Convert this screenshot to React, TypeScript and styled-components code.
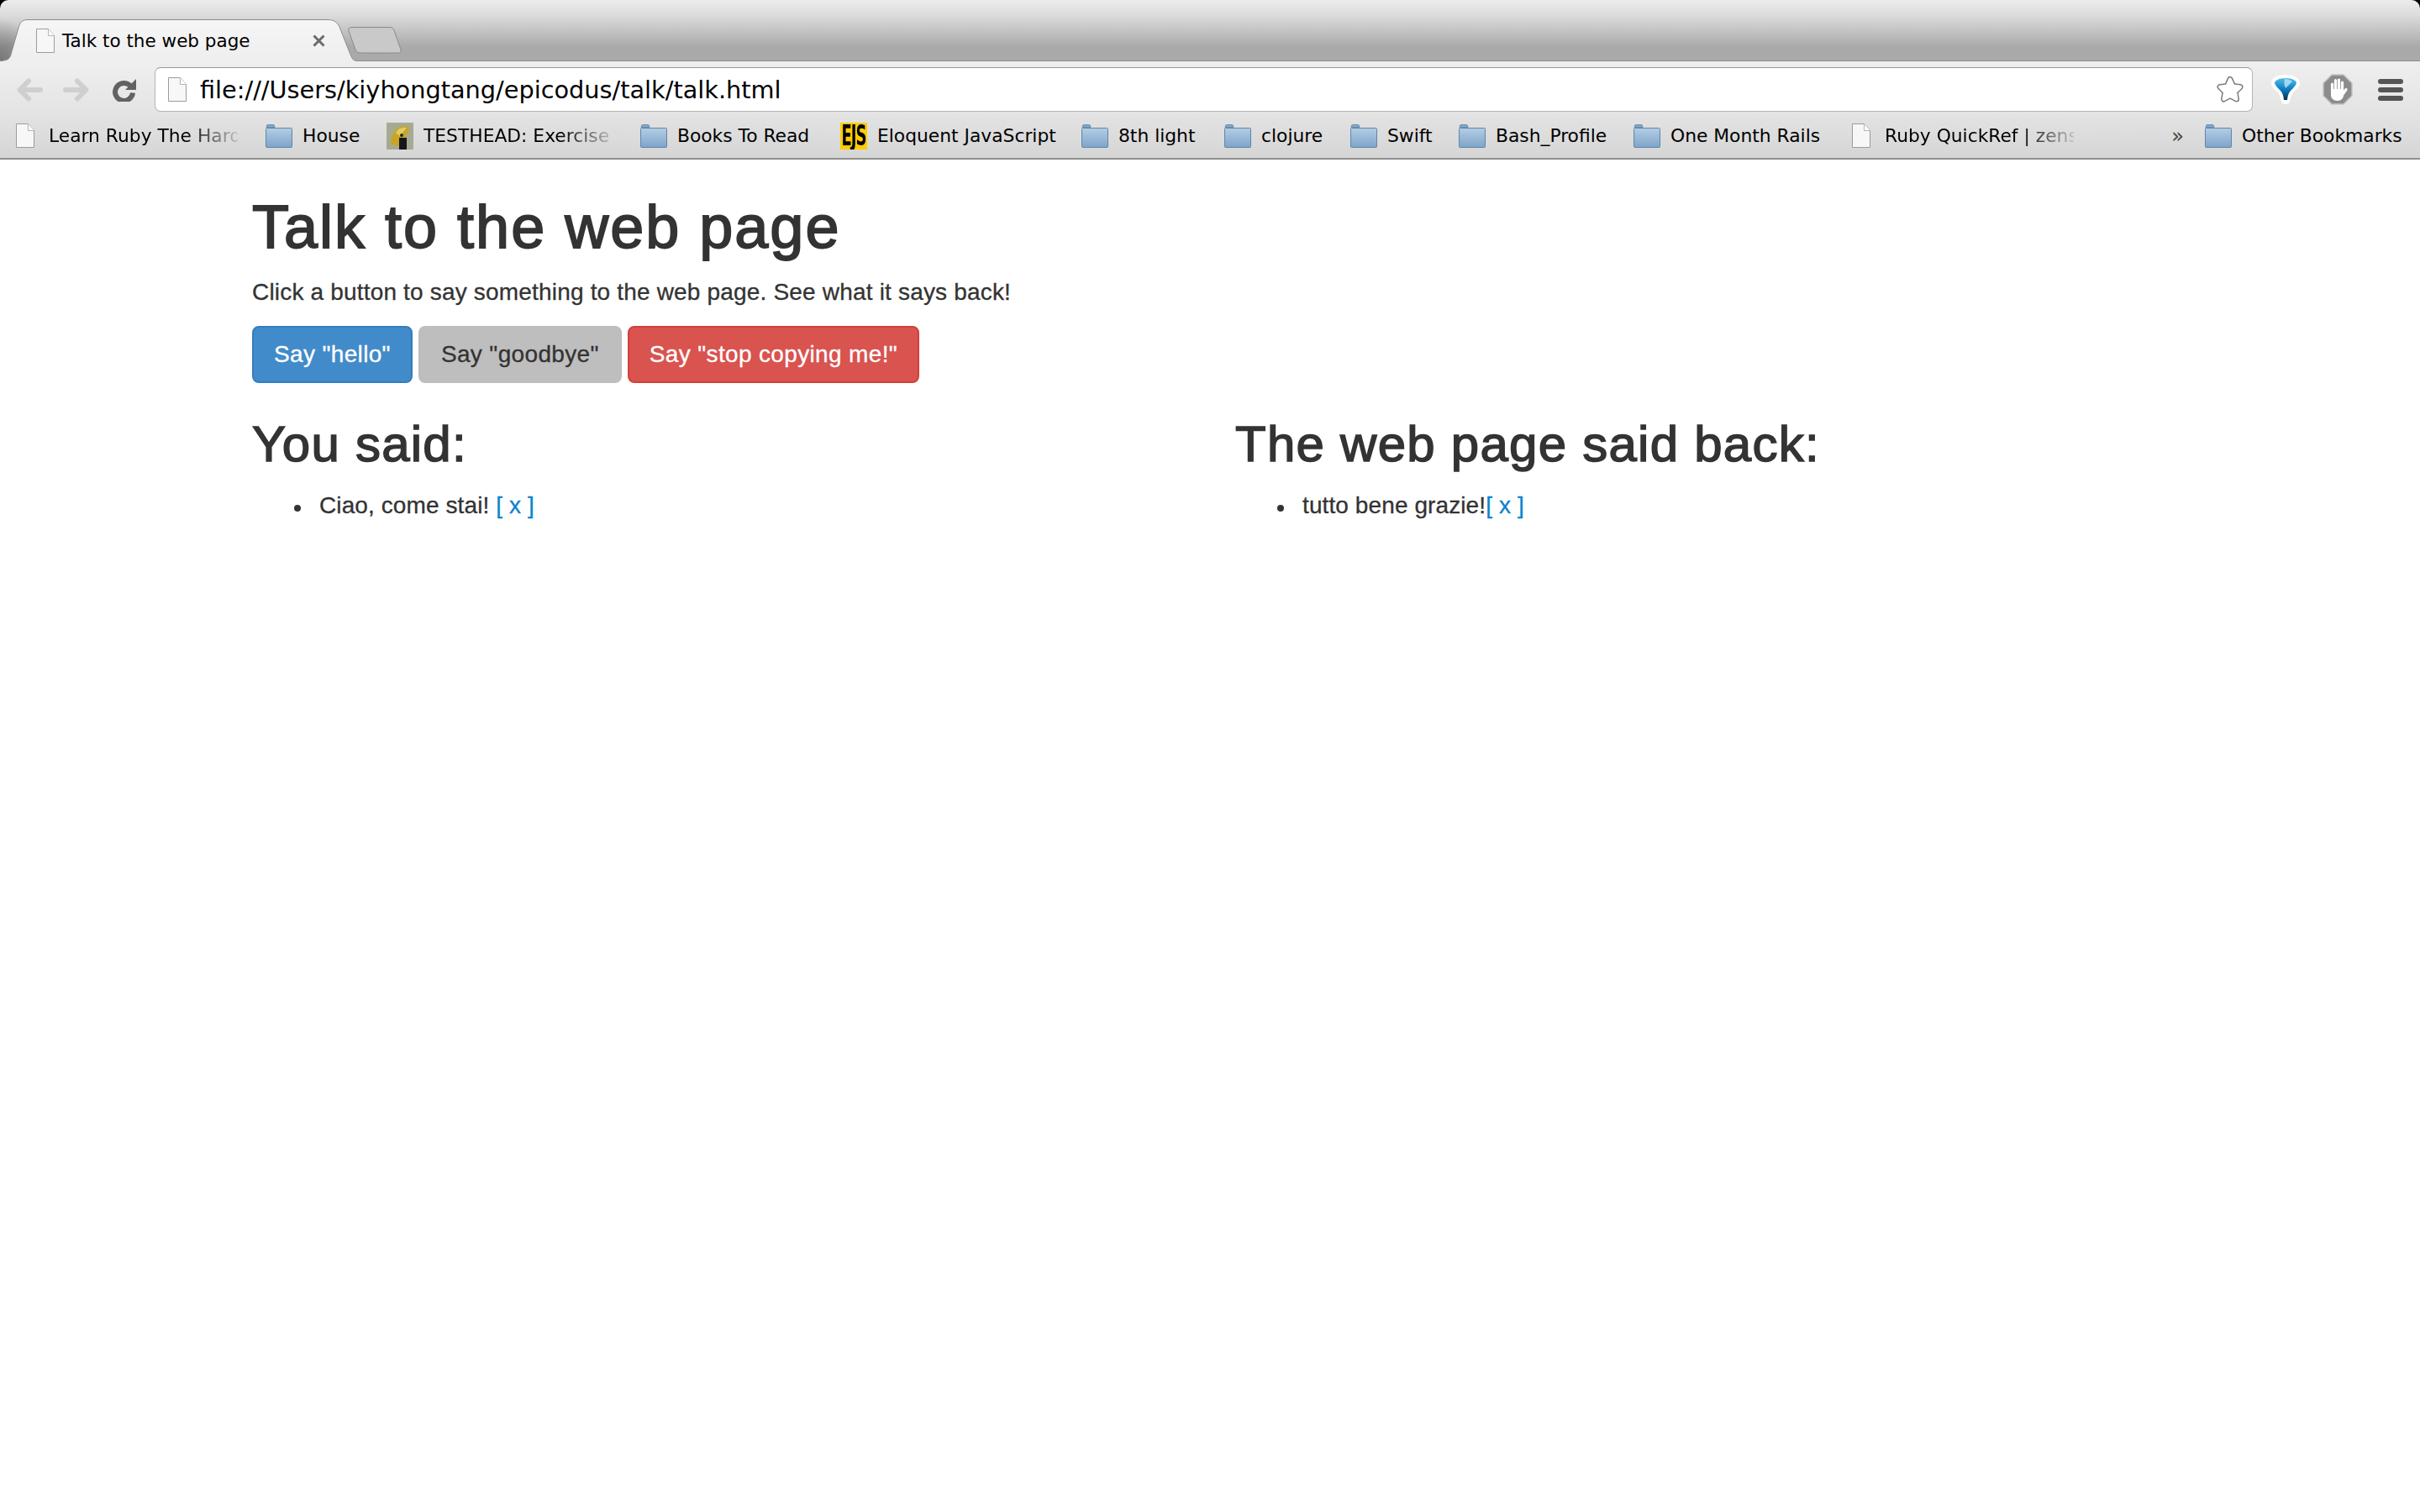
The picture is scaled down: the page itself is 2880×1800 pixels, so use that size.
import React from 'react'
import styled, { createGlobalStyle } from 'styled-components'

const CHROME_FONT = '"DejaVu Sans", sans-serif'
const PAGE_FONT = '"Liberation Sans", Arial, sans-serif'

type BookmarkIcon = 'doc' | 'folder' | 'testhead' | 'ejs'

const BOOKMARKS: { label: string; icon: BookmarkIcon; width: number; fade?: boolean }[] = [
  { label: 'Learn Ruby The Hard', icon: 'doc', width: 225, fade: true },
  { label: 'House', icon: 'folder', width: 67 },
  { label: 'TESTHEAD: Exercise', icon: 'testhead', width: 225, fade: true },
  { label: 'Books To Read', icon: 'folder', width: 161 },
  { label: 'Eloquent JavaScript', icon: 'ejs', width: 210 },
  { label: '8th light', icon: 'folder', width: 93 },
  { label: 'clojure', icon: 'folder', width: 73 },
  { label: 'Swift', icon: 'folder', width: 52 },
  { label: 'Bash_Profile', icon: 'folder', width: 131 },
  { label: 'One Month Rails', icon: 'folder', width: 178 },
  { label: 'Ruby QuickRef | zens', icon: 'doc', width: 225, fade: true },
]

const GlobalStyle = createGlobalStyle`
  html, body {
    margin: 0;
    padding: 0;
    background: #fff;
  }
  * {
    box-sizing: border-box;
  }
`

const Chrome = styled.header`
  background: #000;
  font-family: ${CHROME_FONT};
  color: #000;
`

const TabStrip = styled.div`
  display: flex;
  align-items: flex-start;
  height: 73px;
  padding: 23px 0 0 4px;
  border-radius: 10px 10px 0 0;
  border-bottom: 1px solid #8c8c8c;
  background:
    radial-gradient(ellipse 40px 50px at 0 72px, rgba(90, 90, 90, 0.65), rgba(90, 90, 90, 0)),
    linear-gradient(#ececec 0, #dcdcdc 18px, #a9a9a9 56px, #aaaaaa 72px);
`

const Tab = styled.div`
  position: relative;
  display: flex;
  align-items: center;
  width: 419px;
  height: 50px;
  padding: 0 36px 0 39px;
  font-size: 21.5px;
`

const TabShape = styled.svg`
  position: absolute;
  left: 0;
  top: 0;
`

const TabIcon = styled.span`
  position: relative;
  display: flex;
  margin-right: 9px;
`

const TabTitle = styled.span`
  position: relative;
  flex: 1;
  white-space: nowrap;
`

const TabClose = styled.svg`
  position: relative;
`

const NewTab = styled.svg`
  margin: 9px 0 0 -9px;
`

const Toolbar = styled.div`
  background: linear-gradient(#efefef 0, #e4e4e4 60px, #d5d5d5 116px);
  border-bottom: 2px solid #8e8e8e;
`

const NavRow = styled.div`
  display: flex;
  align-items: center;
  height: 60px;
  padding: 7px 20px 0;
`

const NavButton = styled.svg<{ $gap: number }>`
  flex: none;
  margin-left: ${(p) => p.$gap}px;
  &:first-child {
    margin-left: 0;
  }
`

const AddressBar = styled.div`
  flex: 1;
  display: flex;
  align-items: center;
  gap: 16px;
  height: 53px;
  margin-left: 22px;
  padding: 0 8px 0 15px;
  background: #fff;
  border: 1px solid #b4b4b4;
  border-top-color: #9a9a9a;
  border-radius: 7px;
`

const AddressText = styled.span`
  flex: 1;
  padding-top: 2px;
  font-size: 28.75px;
  line-height: 1;
  white-space: nowrap;
`

const BookmarkBar = styled.nav`
  display: flex;
  align-items: center;
  gap: 33px;
  height: 55px;
  padding: 2px 22px 0 14px;
`

const Bookmark = styled.a`
  display: flex;
  align-items: center;
  gap: 12px;
  font-size: 21.8px;
`

const BookmarkIconBox = styled.span`
  display: flex;
  justify-content: center;
  width: 32px;
`

const BookmarkLabel = styled.span<{ $width: number; $fade?: boolean }>`
  display: block;
  width: ${(p) => p.$width}px;
  white-space: nowrap;
  ${(p) =>
    p.$fade &&
    `mask-image: linear-gradient(to right, #000 72%, rgba(0, 0, 0, 0.12) 100%);`}
`

const Overflow = styled.span`
  margin-left: auto;
  margin-right: -8px;
  font-size: 24px;
  color: #444;
`

const EjsFavicon = styled.span`
  display: block;
  width: 32px;
  height: 32px;
  background: #fc0;
  overflow: hidden;
`

const EjsLetters = styled.span`
  display: block;
  color: #000;
  font: bold 20px/30px "DejaVu Sans Condensed", "DejaVu Sans", sans-serif;
  letter-spacing: -1px;
  text-align: center;
  white-space: nowrap;
  transform: scaleY(1.65);
`

const Container = styled.main`
  width: 2340px;
  margin: 0 auto;
  padding: 41px 30px 0;
  font-family: ${PAGE_FONT};
  color: #333;
`

const Title = styled.h1`
  margin: 0 0 18px;
  font-size: 72px;
  line-height: 79px;
  font-weight: 400;
  letter-spacing: 2px;
  -webkit-text-stroke: 1.8px #333;
`

const Lead = styled.p`
  margin: 0 0 20px;
  font-size: 28px;
  line-height: 40px;
  letter-spacing: 0.18px;
  -webkit-text-stroke: 0.3px #333;
`

const ButtonRow = styled.div`
  display: flex;
  gap: 7px;
`

const BUTTON_COLORS = {
  primary: { bg: '#428bca', border: '#357ebd', fg: '#fff', pad: 24 },
  plain: { bg: '#bebebe', border: '#bebebe', fg: '#333', pad: 25 },
  danger: { bg: '#d9534f', border: '#d43f3a', fg: '#fff', pad: 24 },
}

const Button = styled.button<{ $kind: keyof typeof BUTTON_COLORS }>`
  height: 68px;
  padding: 0 ${(p) => BUTTON_COLORS[p.$kind].pad}px;
  font: 28px ${PAGE_FONT};
  letter-spacing: 0.35px;
  -webkit-text-stroke: 0.3px ${(p) => BUTTON_COLORS[p.$kind].fg};
  border-radius: 8px;
  border: 2px solid ${(p) => BUTTON_COLORS[p.$kind].border};
  background: ${(p) => BUTTON_COLORS[p.$kind].bg};
  color: ${(p) => BUTTON_COLORS[p.$kind].fg};
`

const Columns = styled.section`
  display: grid;
  grid-template-columns: 1fr 1fr;
  column-gap: 60px;
  margin-top: 40px;
`

const ColumnHeading = styled.h2`
  margin: 0 0 20px;
  font-size: 60px;
  line-height: 66px;
  font-weight: 400;
  letter-spacing: 1.25px;
  -webkit-text-stroke: 1.5px #333;
`

const SaidList = styled.ul`
  margin: 0;
  padding-left: 80px;
  list-style: none;
  font-size: 28px;
  line-height: 40px;
  letter-spacing: 0.1px;
  -webkit-text-stroke: 0.3px #333;
`

const SaidItem = styled.li`
  position: relative;
  &::before {
    content: '';
    position: absolute;
    left: -30px;
    top: 19px;
    width: 8px;
    height: 8px;
    border-radius: 50%;
    background: #333;
  }
`

const RemoveLink = styled.a`
  color: #0d82cc;
  -webkit-text-stroke: 0.3px #0d82cc;
`

const DocIcon = () => (
  <svg width="22" height="29" viewBox="0 0 22 29">
    <path d="M.5.5H14.5L21.5 8.5V28.5H.5Z" fill="#f7f7f7" stroke="#9c9c9c" />
    <path d="M14.5.5V8.5H21.5" fill="#fff" stroke="#b5b5b5" />
  </svg>
)

const FolderIcon = () => (
  <svg width="32" height="28" viewBox="0 0 32 28">
    <defs>
      <linearGradient id="folderFill" x1="0" y1="0" x2="0" y2="1">
        <stop offset="0" stopColor="#b4cde4" />
        <stop offset="1" stopColor="#7ea4c9" />
      </linearGradient>
    </defs>
    <path d="M1 3.5Q1 .5 3 .5H9Q11 .5 11 3.5Z" fill="#86a6c6" stroke="#6a8fb2" />
    <rect x=".5" y="4.5" width="31" height="23" rx="1" fill="url(#folderFill)" stroke="#5f86a9" />
  </svg>
)

const TestheadIcon = () => (
  <svg width="32" height="32" viewBox="0 0 32 32">
    <rect width="32" height="32" fill="#a6aa92" />
    <path d="M5 24C5 13 12 4 22 4C27 4 27 8 26 11L16 27C10 28 6 28 5 24Z" fill="#c9a526" />
    <path d="M11 12C14 7 19 5 24 6L16 16Z" fill="#e3cb63" />
    <rect x="15" y="18" width="9" height="14" fill="#14181c" />
    <circle cx="18" cy="15" r="2" fill="#2a2a1a" />
  </svg>
)

const BOOKMARK_ICONS: Record<BookmarkIcon, React.ReactNode> = {
  doc: <DocIcon />,
  folder: <FolderIcon />,
  testhead: <TestheadIcon />,
  ejs: (
    <EjsFavicon>
      <EjsLetters>EJS</EjsLetters>
    </EjsFavicon>
  ),
}

const STAR = 'M18 5.5L21.5 13.5L30 14.5L24 20.5L25.5 29L18 25L10.5 29L12 20.5L6 14.5L14.5 13.5Z'

export default function App() {
  return (
    <>
      <GlobalStyle />
      <Chrome>
        <TabStrip>
          <Tab>
            <TabShape width="419" height="50" viewBox="0 0 419 50">
              <defs>
                <linearGradient id="tabFill" x1="0" y1="0" x2="0" y2="1">
                  <stop offset="0" stopColor="#f6f6f6" />
                  <stop offset="1" stopColor="#eeeeee" />
                </linearGradient>
              </defs>
              <path
                d="M0 49C5 49 8 46 9 42L18 10C20 3 23 .5 29 .5H386C393 .5 397 3 400 9L413 42C415 46 416 49 419 49V50H0Z"
                fill="url(#tabFill)"
              />
              <path
                d="M0 49C5 49 8 46 9 42L18 10C20 3 23 .5 29 .5H386C393 .5 397 3 400 9L413 42C415 46 416 49 419 49"
                fill="none"
                stroke="#8c8c8c"
              />
            </TabShape>
            <TabIcon>
              <DocIcon />
            </TabIcon>
            <TabTitle>Talk to the web page</TabTitle>
            <TabClose width="15" height="15" viewBox="0 0 15 15">
              <path d="M1.5 1.5L13.5 13.5M13.5 1.5L1.5 13.5" stroke="#6b6b6b" strokeWidth="3" />
            </TabClose>
          </Tab>
          <NewTab width="64" height="32" viewBox="0 0 64 32">
            <path
              d="M5 .5H50C53 .5 54 2 55 4L63 27C64 30 62 31 60 31H15C12 31 10 30 9 27L1 5C0 2 2 .5 5 .5Z"
              fill="#c9c9c9"
              stroke="#8a8a8a"
            />
          </NewTab>
        </TabStrip>
        <Toolbar>
          <NavRow>
            <NavButton $gap={0} width="31" height="28" viewBox="0 0 31 28">
              <path
                d="M28 14H5M14 3.5L3.5 14L14 24.5"
                fill="none"
                stroke="#cfcfcf"
                strokeWidth="6"
                strokeLinecap="round"
                strokeLinejoin="round"
              />
            </NavButton>
            <NavButton $gap={24} width="31" height="28" viewBox="0 0 31 28">
              <path
                d="M3 14H26M17 3.5L27.5 14L17 24.5"
                fill="none"
                stroke="#cfcfcf"
                strokeWidth="6"
                strokeLinecap="round"
                strokeLinejoin="round"
              />
            </NavButton>
            <NavButton $gap={28} width="28" height="28" viewBox="0 0 28 28">
              <path d="M21 9A10.5 10.5 0 1 0 24 17.5" fill="none" stroke="#626262" strokeWidth="6" />
              <path d="M28 1V14H15Z" fill="#626262" />
            </NavButton>
            <AddressBar>
              <DocIcon />
              <AddressText>file:///Users/kiyhongtang/epicodus/talk/talk.html</AddressText>
              <svg width="36" height="35" viewBox="0 0 36 35">
                <path d={STAR} fill="#7d7d7d" stroke="#7d7d7d" strokeWidth="7" strokeLinejoin="round" />
                <path d={STAR} fill="#fff" stroke="#fff" strokeWidth="4" strokeLinejoin="round" />
              </svg>
            </AddressBar>
            <NavButton $gap={21} width="36" height="37" viewBox="0 0 36 37">
              <defs>
                <linearGradient id="funnelFill" x1="0" y1="0" x2="0" y2="1">
                  <stop offset="0" stopColor="#52bdea" />
                  <stop offset="0.55" stopColor="#0877bd" />
                  <stop offset="1" stopColor="#0a2f4a" />
                </linearGradient>
              </defs>
              <path
                d="M18 1C8 1 1 5 1 11C1 14 4 18 8 21C11 24 12 28 13 33C14 37 22 37 23 33C24 28 25 24 28 21C32 18 35 14 35 11C35 5 28 1 18 1Z"
                fill="#fff"
              />
              <path
                d="M18 5C10 5 5 8 5 11C6 14 9 17 12 20C15 23 15.5 27 16 31H20C20.5 27 21 23 24 20C27 17 30 14 31 11C31 8 26 5 18 5Z"
                fill="url(#funnelFill)"
              />
              <path d="M17 6C20 6 24 7 26 9L18 17C16 13 16 9 17 6Z" fill="#b9e6f8" opacity="0.8" />
            </NavButton>
            <NavButton $gap={26} width="36" height="37" viewBox="0 0 36 37">
              <path
                d="M11 1H25L35 11V26L25 36H11L1 26V11Z"
                fill="#8c8c8c"
                stroke="#c4c4c4"
                strokeWidth="1.5"
              />
              <g stroke="#fff" strokeWidth="3.2" strokeLinecap="round" fill="none">
                <path d="M11.5 20V12" />
                <path d="M15.5 20V7.5" />
                <path d="M19.5 20V7" />
                <path d="M23.5 20V10" />
                <path d="M23.5 25L28 18.5" />
              </g>
              <path d="M10 18H25V25C25 29 22 32 18 32C13 32 10 29 10 25Z" fill="#fff" />
            </NavButton>
            <NavButton $gap={30} width="30" height="26" viewBox="0 0 30 26">
              <rect y="0" width="30" height="6" rx="3" fill="#555" />
              <rect y="10" width="30" height="6" rx="3" fill="#555" />
              <rect y="20" width="30" height="6" rx="3" fill="#555" />
            </NavButton>
          </NavRow>
          <BookmarkBar>
            {BOOKMARKS.map((item) => (
              <Bookmark key={item.label}>
                <BookmarkIconBox>{BOOKMARK_ICONS[item.icon]}</BookmarkIconBox>
                <BookmarkLabel $width={item.width} $fade={item.fade}>
                  {item.label}
                </BookmarkLabel>
              </Bookmark>
            ))}
            <Overflow>»</Overflow>
            <Bookmark>
              <BookmarkIconBox>
                <FolderIcon />
              </BookmarkIconBox>
              <BookmarkLabel $width={190}>Other Bookmarks</BookmarkLabel>
            </Bookmark>
          </BookmarkBar>
        </Toolbar>
      </Chrome>
      <Container>
        <Title>Talk to the web page</Title>
        <Lead>Click a button to say something to the web page. See what it says back!</Lead>
        <ButtonRow>
          <Button $kind="primary">Say "hello"</Button>
          <Button $kind="plain">Say "goodbye"</Button>
          <Button $kind="danger">Say "stop copying me!"</Button>
        </ButtonRow>
        <Columns>
          <div>
            <ColumnHeading>You said:</ColumnHeading>
            <SaidList>
              <SaidItem>
                Ciao, come stai! <RemoveLink>[ x ]</RemoveLink>
              </SaidItem>
            </SaidList>
          </div>
          <div>
            <ColumnHeading>The web page said back:</ColumnHeading>
            <SaidList>
              <SaidItem>
                tutto bene grazie!<RemoveLink>[ x ]</RemoveLink>
              </SaidItem>
            </SaidList>
          </div>
        </Columns>
      </Container>
    </>
  )
}
